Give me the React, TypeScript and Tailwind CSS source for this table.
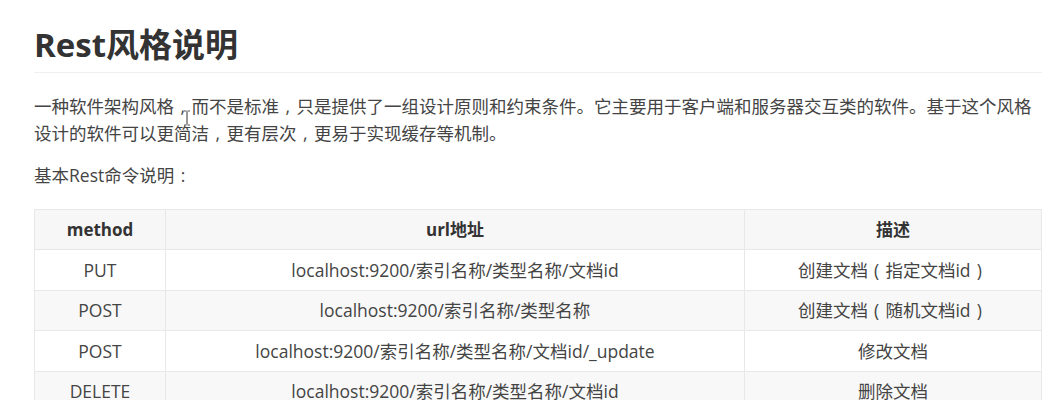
import React from 'react';

// full-width punctuation drawn centred in a 1em box, like the source page's font
const P = ({ c }: { c: string }) => <span className="inline-block w-[1em] text-center">{c}</span>;

const rows = [
  {
    method: 'PUT',
    url: 'localhost:9200/索引名称/类型名称/文档id',
    desc: <>创建文档<P c="(" />指定文档id<P c=")" /></>,
  },
  {
    method: 'POST',
    url: 'localhost:9200/索引名称/类型名称',
    desc: <>创建文档<P c="(" />随机文档id<P c=")" /></>,
  },
  { method: 'POST', url: 'localhost:9200/索引名称/类型名称/文档id/_update', desc: <>修改文档</> },
  { method: 'DELETE', url: 'localhost:9200/索引名称/类型名称/文档id', desc: <>删除文档</> },
];

const font = { fontFamily: '"Open Sans", "Noto Sans CJK SC", sans-serif' };

export default function App() {
  return (
    <div className="bg-white h-[400px] overflow-hidden" style={font}>
      <div className="relative pl-[34px] pr-[16px] pt-[25px]">
        {/* Header */}
        <h1 className="text-[33px] leading-[40px] font-bold text-[#333] pb-[7px] border-b border-[#f0f0f0]">
          Rest风格说明
        </h1>

        <p className="mt-[20px] text-[17.5px] leading-[27px] text-[#444]">
          一种软件架构风格<P c="," />而不是标准<P c="," />只是提供了一组设计原则和约束条件。它主要用于客户端和服务器交互类的软件。基于这个风格设计的软件可以更简洁<P c="," />更有层次<P c="," />更易于实现缓存等机制。
        </p>

        <p className="mt-[15px] text-[17.5px] leading-[27px] text-[#444]">
          基本Rest命令说明<P c=":" />
        </p>

        {/* Command table */}
        <table className="mt-[20px] w-full table-fixed border-collapse text-[17.5px] text-[#444]">
          <colgroup>
            <col className="w-[131px]" />
            <col className="w-[579px]" />
            <col />
          </colgroup>
          <thead>
            <tr className="bg-[#f7f7f7] h-[40px]">
              <th className="border border-[#e8e8e8] font-bold text-[#333] text-[17px]">method</th>
              <th className="border border-[#e8e8e8] font-bold text-[#333] text-[17px]">url地址</th>
              <th className="border border-[#e8e8e8] font-bold text-[#333] text-[17px]">描述</th>
            </tr>
          </thead>
          <tbody>
            {rows.map((r, i) => (
              <tr key={i} className={`h-[40.5px] ${i % 2 === 1 ? 'bg-[#f8f8f8]' : 'bg-white'}`}>
                <td className="border border-[#e8e8e8] text-center">{r.method}</td>
                <td className="border border-[#e8e8e8] text-center">{r.url}</td>
                <td className="border border-[#e8e8e8] text-center">{r.desc}</td>
              </tr>
            ))}
          </tbody>
        </table>

        {/* mouse text cursor from the capture */}
        <svg className="absolute left-[182px] top-[110px]" width="10" height="16" viewBox="0 0 10 16">
          <path d="M2 1h2.5M5.5 1H8M5 1.5v13M2 15h2.5M5.5 15H8" stroke="#555" strokeWidth="1.2" fill="none" />
        </svg>
      </div>
    </div>
  );
}
